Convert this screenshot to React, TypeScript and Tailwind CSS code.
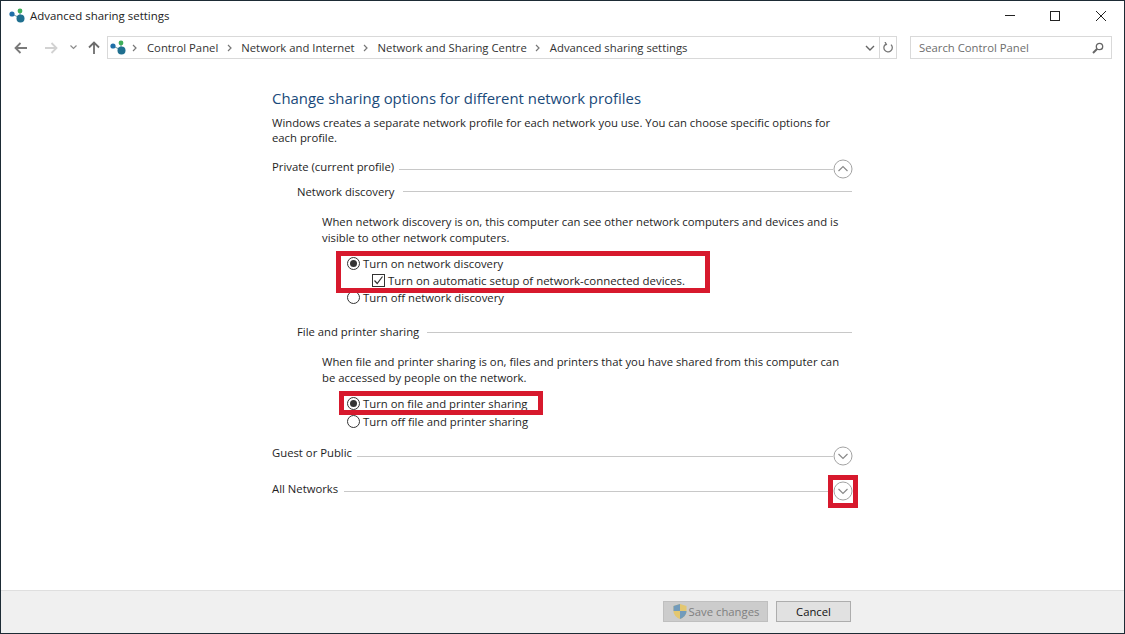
const NetworkIcon = () => (
  <svg width="17" height="15" viewBox="0 0 17 15" className="shrink-0">
    <path d="M3 6 L11 10 M11 3 L11 10" stroke="#6a9aa5" strokeWidth="1" />
    <circle cx="3" cy="6" r="2.6" fill="#1f6fa8" />
    <circle cx="11" cy="3" r="2.4" fill="#3fae5a" />
    <circle cx="11.5" cy="10.5" r="4" fill="#1f6f8f" />
  </svg>
);

const Sep = () => (
  <svg width="6" height="8" viewBox="0 0 6 8" className="shrink-0">
    <path d="M1 1 L4 4 L1 7" fill="none" stroke="#777" strokeWidth="1.2" />
  </svg>
);

const Arrow = ({ dir, color }: { dir: 'left' | 'right' | 'up'; color: string }) => {
  const rotate = dir === 'left' ? 'rotate-0' : dir === 'right' ? 'rotate-180' : 'rotate-90';
  return (
    <svg width="14" height="14" viewBox="0 0 14 14" className={rotate}>
      <path d="M1.5 7 H13 M6.5 2 L1.5 7 L6.5 12" fill="none" stroke={color} strokeWidth="1.8" />
    </svg>
  );
};

const Circle = ({ up }: { up?: boolean }) => (
  <svg width="20" height="20" viewBox="0 0 20 20" className="-mr-px shrink-0">
    <circle cx="10" cy="10" r="9" fill="#fff" stroke="#a3a3a3" strokeWidth="1" />
    <path d={up ? 'M5.5 12 L10 7.5 L14.5 12' : 'M5.5 8 L10 12.5 L14.5 8'} fill="none" stroke="#8a8a8a" strokeWidth="1.2" />
  </svg>
);

const Radio = ({ checked, label }: { checked?: boolean; label: string }) => (
  <div className="flex h-[17px] items-center">
    <span className="flex h-[13px] w-[13px] items-center justify-center rounded-full border border-[#333] bg-white">
      {checked && <span className="h-[7px] w-[7px] rounded-full bg-[#333]" />}
    </span>
    <span className="ml-[3px]">{label}</span>
  </div>
);

const Section = ({ title, titleClass, children }: { title: string; titleClass: string; children?: React.ReactNode }) => (
  <div className="flex items-center">
    <span className={`whitespace-nowrap ${titleClass}`}>{title}</span>
    <span className="h-px flex-1 bg-[#c8c8c8]" />
    {children}
  </div>
);

const crumbs = ['Control Panel', 'Network and Internet', 'Network and Sharing Centre', 'Advanced sharing settings'];

export default function App() {
  return (
    <div
      className="relative flex h-[634px] w-[1125px] flex-col overflow-hidden border border-[#1d2b35] bg-white text-[11.3px] leading-[15px] text-[#1e1e1e]"
      style={{ fontFamily: '"Open Sans", "Noto Sans", sans-serif' }}
    >
      {/* title bar */}
      <div className="flex h-[29px] shrink-0 items-center pl-[8px]">
        <NetworkIcon />
        <span className="ml-[4px] text-[11.45px] text-[#222]">Advanced sharing settings</span>
        <div className="ml-auto flex items-center">
          <span className="mr-[35px] h-px w-[10px] bg-[#222]" />
          <span className="mr-[36px] h-[10px] w-[10px] border border-[#222]" />
          <svg width="10" height="10" viewBox="0 0 10 10" className="mr-[18px]">
            <path d="M0 0 L10 10 M10 0 L0 10" stroke="#222" strokeWidth="1" />
          </svg>
        </div>
      </div>

      {/* nav bar */}
      <div className="mt-[6px] flex h-[23px] shrink-0 items-center pl-[13px]">
        <Arrow dir="left" color="#7a7a7a" />
        <span className="ml-[16px]">
          <Arrow dir="right" color="#d2d2d2" />
        </span>
        <svg width="7" height="5" viewBox="0 0 7 5" className="ml-[12px]">
          <path d="M0.5 0.5 L3.5 3.5 L6.5 0.5" fill="none" stroke="#8c8c8c" strokeWidth="1.2" />
        </svg>
        <span className="ml-[10px]">
          <Arrow dir="up" color="#6d6d6d" />
        </span>
        <div className="ml-[6px] flex h-[23px] w-[790px] items-center border border-[#d9d9d9] pl-[2px]">
          <NetworkIcon />
          <span className="ml-[5px] mr-[9px]">
            <Sep />
          </span>
          {crumbs.map((c, i) => (
            <div key={c} className="flex items-center">
              <span className="text-[#333]">{c}</span>
              {i < crumbs.length - 1 && (
                <span className="mx-[8.5px]">
                  <Sep />
                </span>
              )}
            </div>
          ))}
          <div className="ml-auto flex h-full items-center">
            <svg width="10" height="6" viewBox="0 0 10 6" className="mr-[4px]">
              <path d="M1 1 L5 5 L9 1" fill="none" stroke="#666" strokeWidth="1.4" />
            </svg>
            <div className="flex h-full w-[17px] items-center justify-center border-l border-[#d9d9d9]">
              <svg width="11" height="12" viewBox="0 0 11 12">
                <path d="M3 2 A4.2 4.2 0 1 0 8 2.6 M2 0 L3.4 2.4 L1 3.6" fill="none" stroke="#777" strokeWidth="1.3" />
              </svg>
            </div>
          </div>
        </div>
        <div className="ml-[13px] flex h-[23px] w-[202px] items-center justify-between border border-[#d9d9d9] pl-[8px] pr-[7px] text-[#6d6d6d]">
          <span>Search Control Panel</span>
          <svg width="12" height="12" viewBox="0 0 12 12">
            <circle cx="7.5" cy="4.5" r="3.2" fill="none" stroke="#666" strokeWidth="1.3" />
            <path d="M5 7 L1 11" stroke="#666" strokeWidth="2" />
          </svg>
        </div>
      </div>

      {/* content */}
      <div className="flex-1 pl-[271px] pt-[29px]">
        <div className="w-[580px]">
          <h1 className="text-[14.9px] leading-[20px] text-[#1a4a7a]">Change sharing options for different network profiles</h1>
          <p className="mt-[7px] w-[570px]">
            Windows creates a separate network profile for each network you use. You can choose specific options for each profile.
          </p>

          <div className="mt-[14px]">
            <Section title="Private (current profile)" titleClass="-translate-y-[3px] mr-[5px]">
              <Circle up />
            </Section>
          </div>

          <div className="pl-[25px]">
            <div className="mt-[5px]">
              <Section title="Network discovery" titleClass="mr-[8px]" />
            </div>
            <div className="pl-[25px]">
              <p className="mt-[15px] w-[525px] leading-[16px]">
                When network discovery is on, this computer can see other network computers and devices and is visible to other network computers.
              </p>
              <div className="mt-[9px] pl-[25px]">
                <Radio checked label="Turn on network discovery" />
                <div className="flex h-[17px] items-center pl-[25px]">
                  <span className="flex h-[13px] w-[13px] items-center justify-center border border-[#333]">
                    <svg width="11" height="11" viewBox="0 0 11 11">
                      <path d="M1.5 5.5 L4.2 8.5 L9.5 1.5" fill="none" stroke="#333" strokeWidth="1.2" />
                    </svg>
                  </span>
                  <span className="ml-[3px] text-[11.45px]">Turn on automatic setup of network-connected devices.</span>
                </div>
                <Radio label="Turn off network discovery" />
              </div>
            </div>

            <div className="mt-[19px]">
              <Section title="File and printer sharing" titleClass="-translate-y-[1px] mr-[8px]" />
            </div>
            <div className="pl-[25px]">
              <p className="mt-[14px] w-[525px] leading-[16px]">
                When file and printer sharing is on, files and printers that you have shared from this computer can be accessed by people on the network.
              </p>
              <div className="mt-[9px] pl-[25px]">
                <Radio checked label="Turn on file and printer sharing" />
                <div className="mt-px">
                  <Radio label="Turn off file and printer sharing" />
                </div>
              </div>
            </div>
          </div>

          <div className="mt-[16px]">
            <Section title="Guest or Public" titleClass="-translate-y-[4px] mr-[5px]">
              <Circle />
            </Section>
          </div>
          <div className="mt-[15px]">
            <Section title="All Networks" titleClass="-translate-y-[3px] mr-[6px]">
              <Circle />
            </Section>
          </div>
        </div>
      </div>

      {/* footer */}
      <div className="flex h-[43px] shrink-0 items-start justify-end border-t border-[#dfdfdf] bg-[#f0f0f0] pr-[273px] pt-[10px]">
        <button type="button" className="flex h-[21px] w-[105px] items-center justify-center border border-[#bfbfbf] bg-[#cccccc] text-[#7f7f7f]">
          <svg width="16" height="17" viewBox="0 0 16 17" className="mr-px opacity-80">
            <path d="M8 1 L14.5 3 V8 C14.5 12 11 15 8 16 C5 15 1.5 12 1.5 8 V3 Z" fill="#e9c65a" />
            <path d="M8 1 L1.5 3 V8 H8 Z M8 8 V16 C11 15 14.5 12 14.5 8 Z" fill="#5c8fb8" />
          </svg>
          Save changes
        </button>
        <button type="button" className="ml-[8px] h-[21px] w-[75px] border border-[#adadad] bg-[#e1e1e1] text-[#111]">
          Cancel
        </button>
      </div>

      {/* red annotation boxes */}
      <div className="absolute left-[335px] top-[250px] h-[42px] w-[374px] border-[5px] border-[#d7192d]" />
      <div className="absolute left-[338px] top-[390px] h-[24px] w-[204px] border-[5px] border-[#d7192d]" />
      <div className="absolute left-[827px] top-[474px] h-[33px] w-[30px] border-[5px] border-[#d7192d]" />
    </div>
  );
}
